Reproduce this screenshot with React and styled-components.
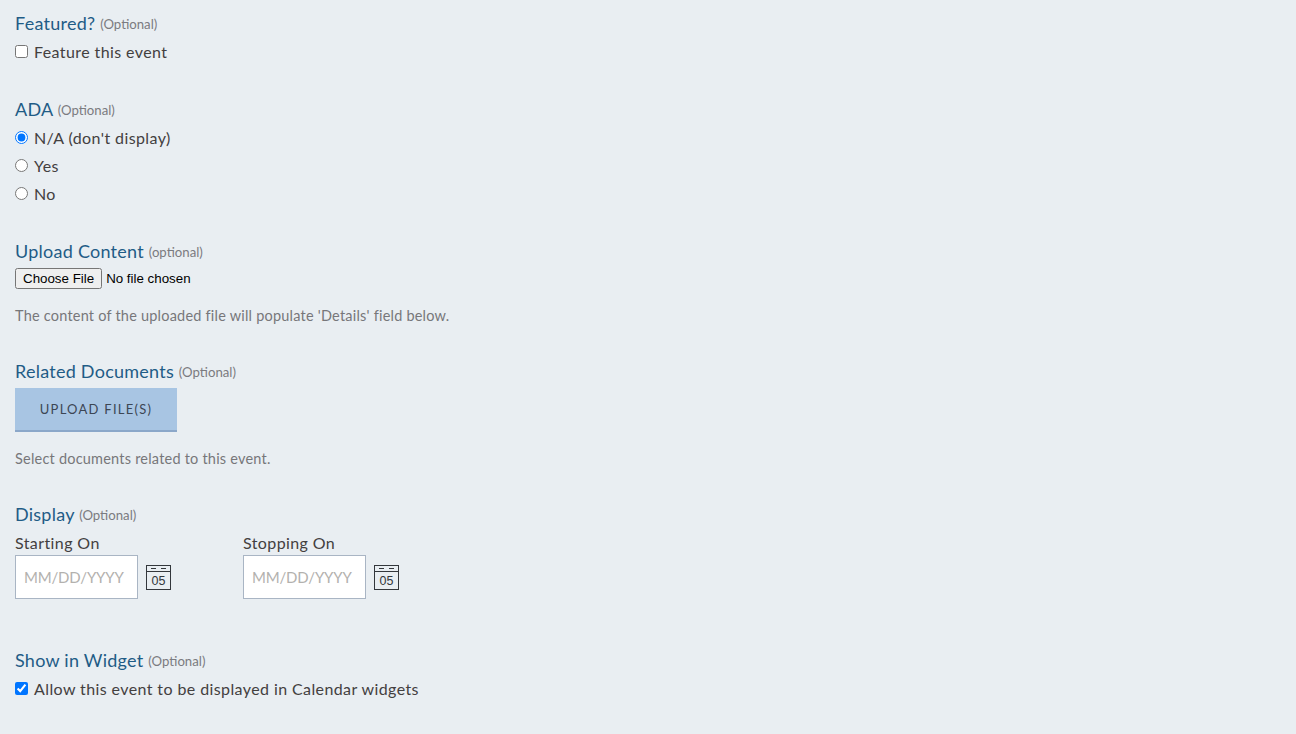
import React from "react";
import styled, { createGlobalStyle } from "styled-components";

const GlobalStyle = createGlobalStyle`
  html, body {
    margin: 0;
    padding: 0;
    background: #e9eef2;
  }
  body {
    font-family: "Lato", "Noto Sans", sans-serif;
    font-size: 16px;
    color: #3f3f46;
  }
`;

const Page = styled.form`
  width: 1296px;
  height: 734px;
  overflow: hidden;
  box-sizing: border-box;
  padding: 10px 15px 0;
`;

const Section = styled.section`
  margin-bottom: ${(p) => p.$gap ?? 30}px;
`;

const Heading = styled.div`
  height: 28px;
  line-height: 26px;
  font-size: 18px;
  letter-spacing: 0.25px;
  color: #1f5c86;
  white-space: nowrap;
`;

const Hint = styled.span`
  font-size: 13.2px;
  letter-spacing: 0;
  color: #7b7b80;
  vertical-align: 1px;
`;

const Choice = styled.label`
  display: flex;
  align-items: center;
  height: 28px;
  line-height: 28px;
  white-space: nowrap;
  font-size: 16px;
  letter-spacing: 0.4px;
  color: #43403f;

  input {
    width: 13px;
    height: 13px;
    margin: 0 6px 2px 0;
  }
`;

const FileRow = styled.div`
  height: 21px;
  margin: 2px 0 0;

  input {
    display: block;
    font-family: "Liberation Sans", Arial, sans-serif;
    font-size: 13.33px;
    letter-spacing: 0;
    color: #000;
  }
`;

const HelpText = styled.p`
  margin: 13px 0 0;
  height: 27px;
  line-height: 27px;
  font-size: 14.5px;
  letter-spacing: 0.215px;
  color: #77777a;
`;

const UploadButton = styled.button`
  display: block;
  box-sizing: border-box;
  width: 162px;
  height: 44px;
  margin-top: 2px;
  border: 0;
  border-bottom: 2px solid #8ba7c9;
  background: #a8c5e3;
  color: #3c4654;
  font-family: inherit;
  font-size: 13px;
  letter-spacing: 1.25px;
  text-transform: uppercase;
`;

const DateRow = styled.div`
  display: flex;
  gap: 72px;
`;

const DateField = styled.div`
  display: flex;
  flex-direction: column;
`;

const DateLabel = styled.label`
  height: 26px;
  line-height: 28px;
  font-size: 16px;
  letter-spacing: 0.4px;
  color: #43403f;
`;

const DateControls = styled.div`
  display: flex;
  align-items: center;
  gap: 8px;
`;

const DateInput = styled.input`
  box-sizing: border-box;
  width: 123px;
  height: 44px;
  padding: 0 8px;
  border: 1px solid #a9b5c4;
  border-radius: 0;
  background: #fff;
  font-family: inherit;
  font-size: 15px;
  letter-spacing: -0.2px;
  outline: none;

  &::placeholder {
    color: #b3b1ae;
    opacity: 1;
  }
`;

const CalendarIcon = () => (
  <svg width="25" height="25" viewBox="0 0 25 25" aria-hidden="true">
    <rect x="0.5" y="0.5" width="24" height="24" fill="none" stroke="#33373c" />
    <path d="M0.5 6.5H24.5" stroke="#33373c" />
    <path d="M5 3.5H10M15 3.5H20" stroke="#33373c" />
    <text
      x="12.5"
      y="20"
      textAnchor="middle"
      fontFamily="Liberation Sans, Arial, sans-serif"
      fontSize="12.5"
      fill="#33373c"
    >
      05
    </text>
  </svg>
);

const App = () => {
  return (
    <>
      <GlobalStyle />
      <Page onSubmit={(e) => e.preventDefault()}>
        <Section>
          <Heading>
            Featured? <Hint>(Optional)</Hint>
          </Heading>
          <Choice>
            <input type="checkbox" />
            Feature this event
          </Choice>
        </Section>

        <Section>
          <Heading>
            ADA <Hint>(Optional)</Hint>
          </Heading>
          <Choice>
            <input type="radio" name="ada" defaultChecked />
            N/A (don't display)
          </Choice>
          <Choice>
            <input type="radio" name="ada" />
            Yes
          </Choice>
          <Choice>
            <input type="radio" name="ada" />
            No
          </Choice>
        </Section>

        <Section $gap={29}>
          <Heading>
            Upload Content <Hint>(optional)</Hint>
          </Heading>
          <FileRow>
            <input type="file" />
          </FileRow>
          <HelpText>The content of the uploaded file will populate 'Details' field below.</HelpText>
        </Section>

        <Section $gap={29}>
          <Heading>
            Related Documents <Hint>(Optional)</Hint>
          </Heading>
          <UploadButton type="button">Upload File(s)</UploadButton>
          <HelpText>Select documents related to this event.</HelpText>
        </Section>

        <Section $gap={48}>
          <Heading>
            Display <Hint>(Optional)</Hint>
          </Heading>
          <DateRow>
            <DateField>
              <DateLabel>Starting On</DateLabel>
              <DateControls>
                <DateInput placeholder="MM/DD/YYYY" />
                <CalendarIcon />
              </DateControls>
            </DateField>
            <DateField>
              <DateLabel>Stopping On</DateLabel>
              <DateControls>
                <DateInput placeholder="MM/DD/YYYY" />
                <CalendarIcon />
              </DateControls>
            </DateField>
          </DateRow>
        </Section>

        <Section>
          <Heading>
            Show in Widget <Hint>(Optional)</Hint>
          </Heading>
          <Choice>
            <input type="checkbox" defaultChecked />
            Allow this event to be displayed in Calendar widgets
          </Choice>
        </Section>
      </Page>
    </>
  );
};

export default App;
